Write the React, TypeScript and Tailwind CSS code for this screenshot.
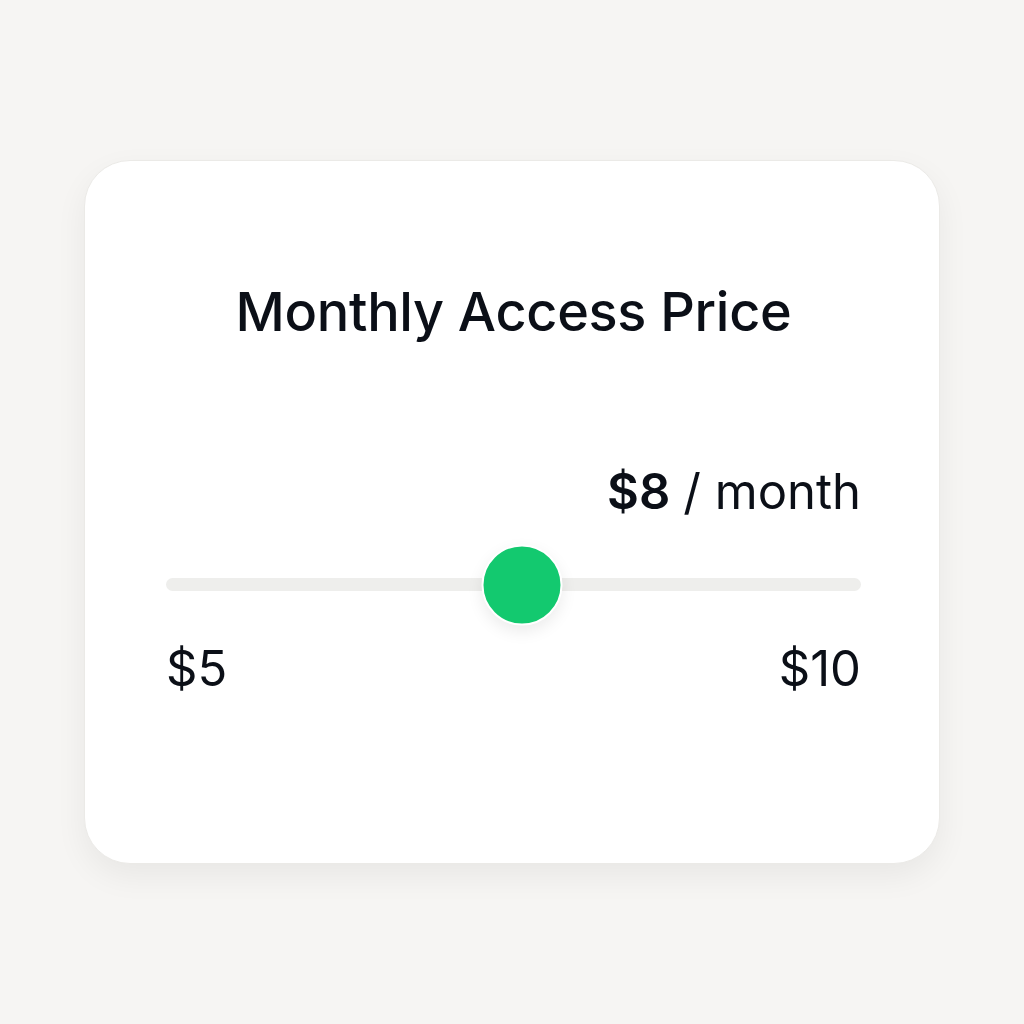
export default function App() {
  return (
    <div className="min-h-screen w-full bg-[#f6f5f3] flex items-center justify-center font-['Inter',sans-serif] text-[#0b0f17]">
      <div className="w-[856px] h-[704px] bg-white rounded-[46px] border border-[#ebeae7] shadow-[0_12px_32px_rgba(0,0,0,0.06)] flex flex-col pl-[81px] pr-[78px] pt-[124px]">
        <h1 className="text-center text-[54px] leading-none font-medium tracking-[-0.3px]">
          Monthly Access Price
        </h1>

        <div className="mt-[128px] flex justify-end items-baseline text-[49px] leading-none">
          <span className="font-semibold">$8</span>
          <span className="ml-[13px] font-normal">/ month</span>
        </div>

        <div className="relative mt-[62px] h-[13px] rounded-full bg-[#eeeeec]">
          <div className="absolute left-[356px] top-1/2 -translate-x-1/2 -translate-y-1/2 w-[81px] h-[81px] rounded-full bg-[#13c96f] border-2 border-white shadow-[0_6px_16px_rgba(0,0,0,0.08)]" />
        </div>

        <div className="mt-[53px] flex justify-between text-[49px] leading-none font-normal">
          <span>$5</span>
          <span>$10</span>
        </div>
      </div>
    </div>
  );
}
